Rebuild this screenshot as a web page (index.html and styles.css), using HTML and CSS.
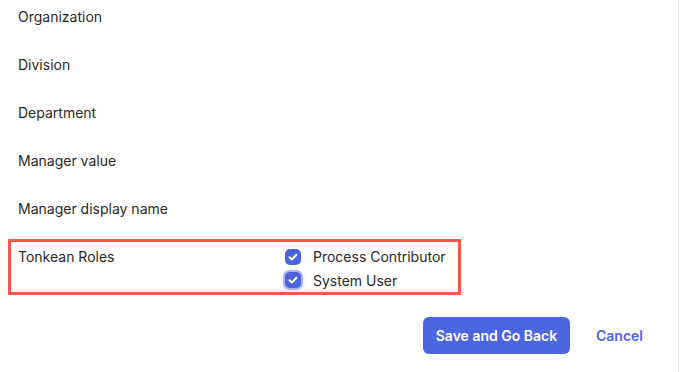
FILE: index.html
```html
<!DOCTYPE html>
<html lang="en">
<head>
    <meta charset="UTF-8">
    <meta name="viewport" content="width=device-width, initial-scale=1.0">
    <title>User Fields</title>
    <link rel="stylesheet" href="styles.css">
</head>
<body>

<div class="panel">
    <div class="field">Organization</div>
    <div class="field">Division</div>
    <div class="field">Department</div>
    <div class="field">Manager value</div>
    <div class="field">Manager display name</div>

    <div class="roles">
        <div class="roles-label">Tonkean Roles</div>
        <div class="roles-list">
            <label class="role">
                <span class="check">
                    <svg viewBox="0 0 16 16" width="16" height="16"><path d="M4.5 8.2l2.3 2.3 4.7-4.8" fill="none" stroke="#fff" stroke-width="2" stroke-linecap="round" stroke-linejoin="round"/></svg>
                </span>
                Process Contributor
            </label>
            <label class="role">
                <span class="check focused">
                    <svg viewBox="0 0 16 16" width="16" height="16"><path d="M4.5 8.2l2.3 2.3 4.7-4.8" fill="none" stroke="#fff" stroke-width="2" stroke-linecap="round" stroke-linejoin="round"/></svg>
                </span>
                System User
            </label>
        </div>
    </div>

    <div class="actions">
        <button class="save">Save and Go Back</button>
        <button class="cancel">Cancel</button>
    </div>
</div>

</body>
</html>
```

FILE: styles.css
```css
body {
    margin: 0;
    font-family: 'Inter', 'Liberation Sans', sans-serif;
    font-size: 14px;
    color: #2a2a2a;
    background: white;
}
.panel {
    width: 679px;
    height: 372px;
    border-right: 1px solid #e6e6e6;
    padding-top: 7px;
    box-sizing: border-box;
}
.field {
    padding-left: 18px;
    line-height: 20px;
    margin-bottom: 28px;
}
.roles {
    display: flex;
    margin-left: 8px;
    width: 453px;
    box-sizing: border-box;
    border: 3px solid #f7564a;
    margin-top: -8px;
    padding: 3px 0 0 7px;
    height: 56px;
}
.roles-label {
    width: 267px;
    line-height: 24px;
}
.roles-list {
    display: flex;
    flex-direction: column;
}
.role {
    display: flex;
    align-items: center;
    height: 24px;
    gap: 12px;
}
.check {
    width: 16px;
    height: 16px;
    border-radius: 5px;
    background: #4b63df;
    display: flex;
}
.check.focused {
    box-shadow: 0 0 0 2px rgba(75, 99, 223, 0.35), 0 0 3px 2px rgba(75, 99, 223, 0.25);
}
.actions {
    display: flex;
    align-items: center;
    margin-top: 22px;
    padding-left: 423px;
    gap: 26px;
}
.save {
    background: #4c66e1;
    color: white;
    font-family: inherit;
    font-weight: 600;
    font-size: 14px;
    border: none;
    border-radius: 6px;
    height: 37px;
    width: 147px;
}
.cancel {
    background: none;
    border: none;
    padding: 0;
    color: #4c66e1;
    font-family: inherit;
    font-weight: 600;
    font-size: 14px;
}
```
